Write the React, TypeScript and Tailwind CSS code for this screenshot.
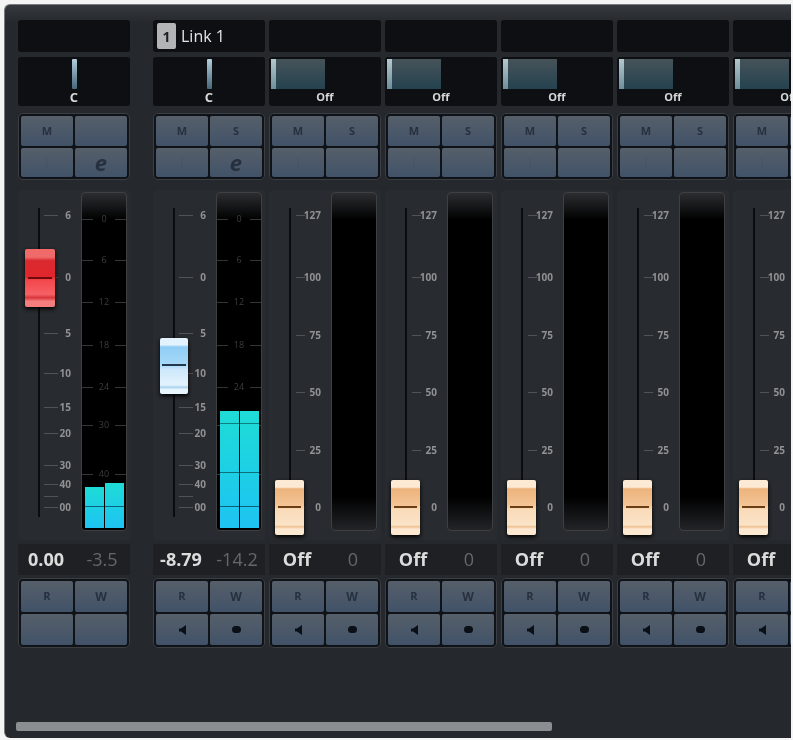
import type { ReactNode } from 'react'

type Tick = { y: number; label: string; strong?: boolean }

type Strip = {
  kind: 'audio' | 'midi'
  link?: boolean
  solo: boolean
  automationIcons: boolean
  handleTop: number
  handleLeft: number
  fill?: [number, number]
  value: string
  peak: string
}

const audioScale: Tick[] = [
  { y: 25, label: '6' },
  { y: 87, label: '0' },
  { y: 143, label: '5' },
  { y: 183, label: '10' },
  { y: 217, label: '15' },
  { y: 243, label: '20' },
  { y: 275, label: '30' },
  { y: 294, label: '40' },
  { y: 306, label: '' },
  { y: 317, label: '00' },
]

const midiScale: Tick[] = [
  { y: 25, label: '127' },
  { y: 87, label: '100' },
  { y: 145, label: '75' },
  { y: 202, label: '50' },
  { y: 260, label: '25' },
  { y: 317, label: '0' },
]

const meterScale: Tick[] = [
  { y: 26, label: '0' },
  { y: 67, label: '6' },
  { y: 109, label: '12' },
  { y: 152, label: '18' },
  { y: 194, label: '24' },
  { y: 232, label: '30' },
  { y: 281, label: '40' },
]

const midi: Strip = {
  kind: 'midi',
  solo: true,
  automationIcons: true,
  handleTop: 290,
  handleLeft: 6,
  value: 'Off',
  peak: '0',
}

const strips: Strip[] = [
  { kind: 'audio', solo: false, automationIcons: false, handleTop: 59, handleLeft: 7, fill: [487, 483], value: '0.00', peak: '-3.5' },
  { kind: 'audio', link: true, solo: true, automationIcons: true, handleTop: 148, handleLeft: 7, fill: [411, 411], value: '-8.79', peak: '-14.2' },
  midi,
  midi,
  midi,
  midi,
  midi,
]

function Btn({ children, className = '' }: { children?: ReactNode; className?: string }) {
  return (
    <div
      className={`flex items-center justify-center rounded-[2px] bg-gradient-to-b from-[#565f6a] to-[#415268] text-[#26303e] ${className}`}
    >
      {children}
    </div>
  )
}

function ButtonGroup({ children, className = '' }: { children: ReactNode; className?: string }) {
  return (
    <div className={`rounded-[5px] border border-[#3b3e42] bg-[#0f1318] p-[2px] ${className}`}>
      <div className="grid h-full grid-cols-2 grid-rows-2 gap-[2px]">{children}</div>
    </div>
  )
}

function PanDisplay({ kind }: { kind: Strip['kind'] }) {
  return (
    <div className="mt-[5px] flex h-[49px] flex-col rounded-[3px] bg-[#0d0f12] px-[2px] pt-[2px]">
      {kind === 'audio' ? (
        <div className="flex h-[30px] justify-center">
          <div className="w-[5px] rounded-[1px] bg-gradient-to-b from-[#b4cfdd] to-[#46687a]" />
        </div>
      ) : (
        <div className="flex h-[30px] w-[54px] bg-gradient-to-b from-[#465359] to-[#24424f]">
          <div className="w-[5px] bg-gradient-to-b from-[#b4c8ce] to-[#6f8f9c]" />
        </div>
      )}
      <div className={`mt-[1px] text-center leading-[14px] font-bold text-[#d8d8d8] ${kind === 'audio' ? 'text-[13px]' : 'text-[11px]'}`}>
        {kind === 'audio' ? 'C' : 'Off'}
      </div>
    </div>
  )
}

function FaderHandle({ kind, top, left, link }: { kind: Strip['kind']; top: number; left: number; link?: boolean }) {
  if (kind === 'midi') {
    return (
      <div
        className="absolute h-[55px] w-[29px] rounded-[2px] bg-[linear-gradient(#fdead4_0%,#fdead4_13%,#edb37c_16%,#f3c495_46%,#f9dcb9_54%,#fbe3c8_82%,#edc08f_85%,#fde8d2_89%)] shadow-[0_2px_4px_#000]"
        style={{ top, left }}
      >
        <div className="mx-[3px] mt-[26px] h-[2px] bg-[#6a3d15]" />
      </div>
    )
  }
  if (link) {
    return (
      <div
        className="absolute h-[56px] w-[28px] rounded-[2px] bg-[linear-gradient(#e2f3fd_0%,#e2f3fd_12%,#8fcdf5_16%,#a8d9f8_48%,#cde8fb_56%,#e4f3fd_84%,#a9d3ec_88%,#e8f5fd_92%)] shadow-[0_2px_4px_#000]"
        style={{ top, left }}
      >
        <div className="mx-[2px] mt-[26px] h-[2px] bg-[#24384c]" />
      </div>
    )
  }
  return (
    <div
      className="absolute h-[58px] w-[30px] rounded-[2px] bg-[linear-gradient(#f06a6a_0%,#ef6a6a_14%,#d92a30_20%,#e0262c_48%,#f2474c_54%,#f56165_78%,#d8353a_84%,#f47d7d_90%)] shadow-[0_2px_4px_#000]"
      style={{ top, left }}
    >
      <div className="mx-[3px] mt-[28px] h-[2px] bg-[#70090c]" />
    </div>
  )
}

function FaderColumn({ strip }: { strip: Strip }) {
  const scale = strip.kind === 'audio' ? audioScale : midiScale
  return (
    <div className={`relative h-full shrink-0 ${strip.kind === 'midi' ? 'w-[61px]' : 'w-[62px]'}`}>
      <div className="absolute top-[18px] left-[20px] h-[309px] w-[2px] bg-[#0a0c0f]" />
      {scale.map((t) => (
        <div key={t.y + t.label} className="absolute right-0 left-0" style={{ top: t.y - 7 }}>
          <div
            className={`absolute top-[7px] h-px bg-[#505357] ${
              strip.kind === 'midi' ? 'left-[27px] w-[9px]' : 'left-[26px] w-[14px]'
            }`}
          />
          <span className="absolute top-0 right-[9px] text-[10px] leading-[14px] font-bold text-[#8f9193]">
            {t.label}
          </span>
        </div>
      ))}
      <FaderHandle kind={strip.kind} top={strip.handleTop} left={strip.handleLeft} link={strip.link} />
    </div>
  )
}

function Meter({ strip }: { strip: Strip }) {
  const bg =
    strip.kind === 'midi'
      ? 'bg-[linear-gradient(#2b2d30_0%,#000_8%,#000_90%,#222427_100%)]'
      : 'bg-[linear-gradient(#2b2d30_0%,#000_8%,#000_100%)]'
  return (
    <div className={`relative mt-[2px] h-[339px] w-[46px] shrink-0 overflow-hidden rounded-[4px] border border-[#3e3f40] ${bg}`}>
      {strip.kind === 'audio' &&
        meterScale.map((t) => (
          <div key={t.label} className="absolute inset-x-0 flex items-center gap-[4px]" style={{ top: t.y - 7 }}>
            <div className="h-px w-[12px] bg-[#333537]" />
            <span className="w-[14px] text-center text-[9px] leading-[14px] text-[#3b3d3f]">{t.label}</span>
            <div className="h-px w-[12px] bg-[#333537]" />
          </div>
        ))}
      {strip.fill &&
        strip.fill.map((top, i) => (
          <div
            key={i}
            className="absolute bottom-[2px] w-[19px] bg-gradient-to-b from-[#1fdcd6] to-[#1fc3f2]"
            style={{ top: top - 193, left: i === 0 ? 3 : 23 }}
          >
            <div className="absolute inset-x-0 h-px bg-[#0d5f78]" style={{ bottom: 21 }} />
            {strip.link && (
              <>
                <div className="absolute inset-x-0 h-px bg-[#0d6f78]" style={{ bottom: 55 }} />
                <div className="absolute inset-x-0 h-px bg-[#0d7f80]" style={{ bottom: 104 }} />
              </>
            )}
          </div>
        ))}
    </div>
  )
}

function ChannelStrip({ strip, first }: { strip: Strip; first: boolean }) {
  return (
    <div className={`flex w-[112px] shrink-0 flex-col ${first ? 'mr-[19px]' : ''}`}>
      <div className="flex h-[32px] items-center gap-[5px] rounded-[3px] bg-[#0d0f12] pl-[4px]">
        {strip.link && (
          <>
            <span className="flex h-[26px] w-[19px] items-center justify-center rounded-[2px] bg-[#b2b4b6] text-[14px] font-bold text-[#1c1e20]">
              1
            </span>
            <span className="text-[16px] text-[#e4e4e4]">Link 1</span>
          </>
        )}
      </div>
      <PanDisplay kind={strip.kind} />
      <ButtonGroup className="mt-[7px] h-[67px]">
        <Btn className="text-[11px] font-bold">M</Btn>
        <Btn className="text-[11px] font-bold">{strip.solo ? 'S' : ''}</Btn>
        <Btn className="text-[11px] text-[#445367]">|</Btn>
        <Btn className="text-[22px] leading-none font-bold text-[#111a24] italic">
          {strip.kind === 'audio' ? 'e' : ''}
        </Btn>
      </ButtonGroup>
      <div className="mt-[10px] flex h-[350px] gap-[1px] rounded-[3px] bg-[#282b2f]">
        <FaderColumn strip={strip} />
        <Meter strip={strip} />
      </div>
      <div className="mt-[4px] grid h-[31px] grid-cols-2 items-center bg-[#1e2023] text-center text-[18px]">
        <span className="font-bold text-[#dcdcdc]">{strip.value}</span>
        <span className="text-[#65676a]">{strip.peak}</span>
      </div>
      <ButtonGroup className="mt-[3px] h-[70px]">
        <Btn className="text-[11px] font-bold">R</Btn>
        <Btn className="text-[12px] font-bold">W</Btn>
        <Btn>
          {strip.automationIcons && (
            <svg width="7" height="10" viewBox="0 0 7 10" className="fill-[#0a1016]">
              <path d="M0 3.5h2L7 0v10L2 6.5H0z" />
            </svg>
          )}
        </Btn>
        <Btn>
          {strip.automationIcons && <div className="h-[7px] w-[9px] rounded-full bg-[#0a1016]" />}
        </Btn>
      </ButtonGroup>
    </div>
  )
}

export default function App() {
  return (
    <div
      className="h-[740px] w-[793px] overflow-hidden bg-[#f4f4f4] pt-[4px] pr-[2px] pb-[2px] pl-[4px] blur-[0.6px]"
      style={{ fontFamily: '"Open Sans", "Liberation Sans", sans-serif' }}
    >
      <div className="flex h-full flex-col overflow-hidden rounded-tl-[6px] rounded-bl-[6px] border-t border-l border-[#77797b] bg-[linear-gradient(#35383c_0px,#25282c_18px)]">
        <div className="flex gap-1 pt-[15px] pl-[13px]">
          {strips.map((s, i) => (
            <ChannelStrip key={i} strip={s} first={i === 0} />
          ))}
        </div>
        <div className="mt-auto mb-[7px] ml-[11px] h-[9px] w-[536px] rounded-[2px] bg-[#8b8e91]" />
      </div>
    </div>
  )
}
